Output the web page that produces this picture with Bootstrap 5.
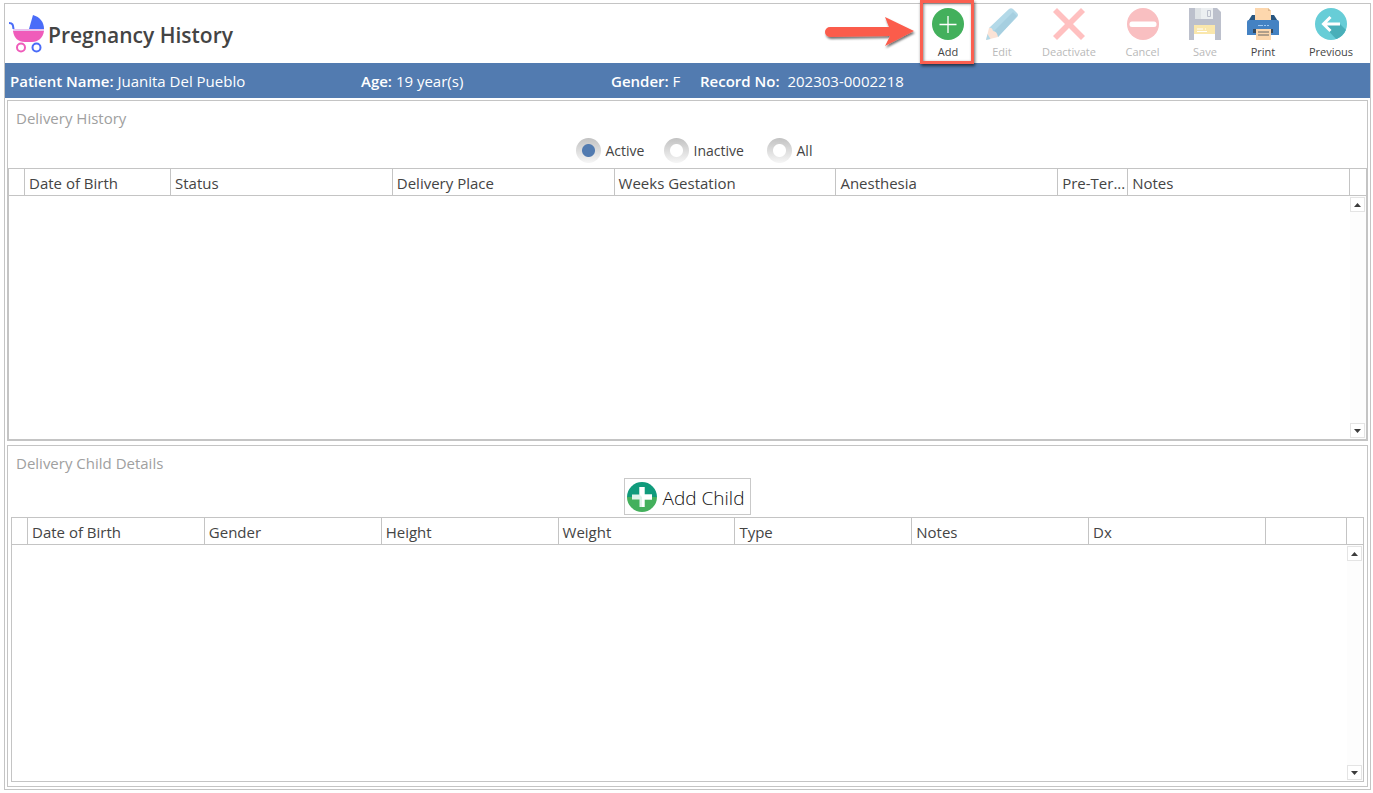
<!DOCTYPE html>
<html lang="en">
<head>
<meta charset="utf-8">
<meta name="viewport" content="width=device-width, initial-scale=1">
<title>Pregnancy History</title>
<link href="https://cdn.jsdelivr.net/npm/bootstrap@5.3.0/dist/css/bootstrap.min.css" rel="stylesheet">
<style>
  :root { --line: #c4c4c4; --ink: #444; --brand: #527bb0; }
  body { font-family: "Segoe UI", "Open Sans", "Noto Sans", sans-serif; font-size: 15px; line-height: 20px; color: var(--ink); background: #fff; }
  .app-shell { padding: 3px 2px 3px 4px; }
  .app-frame { border: 1px solid var(--line); }
  .app-head { height: 59px; padding-left: 4px; }
  .app-title { font-size: 21px; line-height: 28px; font-weight: 600; padding: 2px 0 0 2px; }
  .tool { padding: 4px 0 0; border: 0; background: none; font-size: 11px; line-height: 16px; color: var(--ink); width: 58px; }
  .tool svg { width: 32px; height: 32px; display: block; margin: 0 auto 4px; }
  .tool:disabled { color: #b9b9b9; }
  .tool-sm { width: 54px; }
  .tool-md { width: 67px; }
  .tool-lg { width: 78px; }
  .tool-xl { width: 80px; }
  .callout-box { position: absolute; inset: -4px 1px -1px -1px; border: 3px solid #fb5f50; box-shadow: 1px 2px 3px rgba(0,0,0,.6), inset 1px 1px 3px rgba(0,0,0,.45); pointer-events: none; z-index: 2; }
  .callout-arrow { position: absolute; right: 100%; top: 6px; width: 100px; height: 44px; pointer-events: none; }
  .patient-bar { background: var(--brand); color: #fff; height: 35px; padding: 0 5px; font-size: 15px; }
  .patient-bar b { font-weight: 600; }
  .pb-name { width: 351px; } .pb-age { width: 250px; } .pb-sex { width: 89px; }
  .panels { padding: 2px; gap: 4px; }
  .panel { border: 1px solid var(--line); flex: 1 1 50%; min-height: 0; margin: 0; }
  .panel-name { color: #a0a0a0; font-size: 15px; line-height: 20px; font-weight: 400; padding: 7px 8px 0; margin: 0; }
  .panel-inset { padding: 0 3px 4px; }
  .panel-inset .panel-name { padding-left: 5px; }
  .filters { display: grid; grid-template-columns: 88px 103px 47px; padding: 4px 0 0 14px; height: 40px; align-items: center; font-size: 14px; margin: 0 auto; }
  .filters label { display: flex; align-items: center; gap: 5px; }
  .filters span { padding-top: 2px; }
  .filters input { appearance: none; flex: none; width: 25px; height: 25px; border-radius: 50%; margin: 0; background: radial-gradient(circle, #fff 6px, transparent 7px), linear-gradient(#c2c2c2, #f6f6f6); }
  .filters input:checked { background: radial-gradient(circle, var(--brand) 6px, transparent 7px), linear-gradient(#c2c2c2, #f6f6f6); }
  .grid-box { border: 1px solid var(--line); min-height: 0; }
  .grid-head { table-layout: fixed; width: 100%; border-collapse: separate; border-spacing: 0; }
  .grid-head th { height: 27px; padding: 2px 0 0 4px; font-weight: 400; border-bottom: 1px solid var(--line); border-right: 1px solid var(--line); white-space: nowrap; text-align: left; }
  .grid-head th:last-child { border-right: 0; }
  .c-mark { width: 16px; } .c-dob { width: 146px; } .c-pre { width: 70px; } .c-act { width: 81px; }
  .scroll-rail { width: 16px; padding: 1px 1px 1px 0; background: #fdfdfd; }
  .scroll-rail button { width: 15px; height: 15px; padding: 0; border: 1px solid #e4e4e4; background: #fff; display: flex; align-items: center; justify-content: center; }
  .scroll-rail svg { width: 7px; height: 4px; fill: #3c3c3c; }
  .add-row { height: 44px; padding-top: 5px; }
  .add-child { height: 37px; padding: 0 6px 0 2px; border: 1px solid #c9c9c9; background: #fff; color: #111; font-size: 19px; line-height: 28px; font-weight: 300; gap: 6px; }
  .add-child span { padding-top: 2px; }
  .add-child svg { width: 30px; height: 30px; }
</style>
</head>
<body>
<div class="app-shell vh-100 d-flex flex-column">
<div class="app-frame flex-grow-1 d-flex flex-column">
  <header class="app-head d-flex justify-content-between">
    <div class="d-flex align-items-center">
      <svg width="37" height="40" viewBox="0 0 37 40" aria-hidden="true">
        <path d="M0 9c4 0 4 2 4.500 6" fill="none" stroke="#4a6cf8" stroke-width="2"/>
        <path d="M20 15 24 1c7 2 11 7 11 14z" fill="#4a6cf8"/>
        <path d="M4 15h31v2H4z" fill="#e7c4ee"/>
        <path d="M4 17h31c-1 7-6 11-12 11h-7C9 28 5 24 4 17z" fill="#ef5cba"/>
        <circle cx="12" cy="33.500" r="4" fill="#fff" stroke="#ef5cba" stroke-width="2"/>
        <circle cx="27.500" cy="33.500" r="4" fill="#fff" stroke="#4a6cf8" stroke-width="2"/>
      </svg>
      <h1 class="app-title mb-0">Pregnancy History</h1>
    </div>
    <div class="d-flex align-items-start">
      <div class="position-relative align-self-stretch">
        <svg class="callout-arrow" viewBox="0 0 100 44" aria-hidden="true">
          <defs><filter id="soft" x="-10%" y="-20%" width="120%" height="150%"><feDropShadow dx="1" dy="2" stdDeviation="1.200" flood-opacity=".55"/></filter></defs>
          <path d="M9 17 68 17 64 7 93 21 64 36l5-10L9 27a5 5 0 0 1 0-10z" fill="#fb5b4c" filter="url(#soft)"/>
        </svg>
        <button type="button" class="tool tool-sm">
          <svg viewBox="0 0 32 32"><circle cx="16" cy="16" r="16" fill="#43b05c"/><path d="M16 8v17M7.500 16.500h17" stroke="#fff" stroke-width="1.300"/></svg>Add
        </button>
        <div class="callout-box"></div>
      </div>
      <button type="button" class="tool tool-sm" disabled>
        <svg viewBox="0 0 32 32"><path d="M3 20 23 1q2-1.500 4 0l4 4q2 2 0 4L12 29z" fill="#b3d9e8"/><path d="m7 24 20-20 4 4L12 29z" fill="#a6cfe0"/><path d="M3 20q3-1 4 3 4 0 5 6L0 32z" fill="#fbe3d6"/><path d="m1.500 26 3 5L0 32z" fill="#b3d9e8"/></svg>Edit
      </button>
      <button type="button" class="tool tool-xl" disabled>
        <svg viewBox="0 0 32 32"><path d="M4 0 16 12 28 0l4 4-12 12 12 12-4 4-12-12L4 32l-4-4 12-12L0 4z" fill="#ffc0c0"/></svg>Deactivate
      </button>
      <button type="button" class="tool tool-md" disabled>
        <svg viewBox="0 0 32 32"><circle cx="16" cy="16" r="16" fill="#f9bfc1"/><rect x="2.500" y="13.500" width="27" height="5.500" rx="2.500" fill="#fff"/></svg>Cancel
      </button>
      <button type="button" class="tool" disabled>
        <svg viewBox="0 0 32 32"><path d="M0 0h28l4 4v28H0z" fill="#bcc0cc"/><path d="M6 0h18v11H6z" fill="#eceff1"/><path d="M6 0h6v11H6z" fill="#dfe3e6"/><path d="M18.500 2.500h3v6h-3z" fill="#eceff1" stroke="#bcc0cc"/><path d="M5 17h21v15H5z" fill="#fff"/><path d="M5 17h21v9H5z" fill="#fae7ac"/><path d="M8 21h6M8 23.500h10M16 21h1" stroke="#fff"/></svg>Save
      </button>
      <button type="button" class="tool">
        <svg viewBox="0 0 32 32"><path d="M5 7h22l5 8H0z" fill="#285680"/><path d="M8 0h13l3 3v9H8z" fill="#fdd7ad"/><path d="M21 0v3h3z" fill="#e0b98e"/><path d="M0 14q0-2 2-2h28q2 0 2 2v13H0z" fill="#4482c3"/><path d="M11 17.500h5M17 17.500h2M20 17.500h2" stroke="#9fc9f3"/><path d="M6 21h20v4H6z" fill="#35495e"/><path d="M9 21h15v11H9z" fill="#fdd7ad"/><path d="M11 24h11M11 27h11" stroke="#666"/></svg>Print
      </button>
      <button type="button" class="tool tool-lg">
        <svg viewBox="0 0 32 32"><defs><clipPath id="disc"><circle cx="16" cy="16" r="16"/></clipPath></defs><g clip-path="url(#disc)"><path d="M0 0h32v32H0z" fill="#67cdd7"/><path d="m8 17 16-2 8 8v9H22z" fill="#49afb9"/></g><path d="M25 16H9M15.500 9 8.500 16l7 7" fill="none" stroke="#fff" stroke-width="3"/></svg>Previous
      </button>
    </div>
  </header>

  <div class="patient-bar d-flex align-items-center">
    <div class="pb-name"><b>Patient Name:</b> Juanita Del Pueblo</div>
    <div class="pb-age"><b>Age:</b> 19 year(s)</div>
    <div class="pb-sex"><b>Gender:</b> F</div>
    <div><b class="pe-1">Record No:</b> 202303-0002218</div>
  </div>

  <main class="panels flex-grow-1 d-flex flex-column">
    <section class="panel d-flex flex-column">
      <h2 class="panel-name">Delivery History</h2>
      <div class="filters" role="radiogroup" aria-label="Record status">
        <label><input type="radio" name="status" checked><span>Active</span></label>
        <label><input type="radio" name="status"><span>Inactive</span></label>
        <label><input type="radio" name="status"><span>All</span></label>
      </div>
      <div class="grid-box flex-grow-1 d-flex flex-column">
        <table class="grid-head">
          <colgroup><col class="c-mark"><col class="c-dob"><col><col><col><col><col class="c-pre"><col><col class="c-mark"></colgroup>
          <thead><tr><th></th><th>Date of Birth</th><th>Status</th><th>Delivery Place</th><th>Weeks Gestation</th><th>Anesthesia</th><th>Pre-Ter...</th><th>Notes</th><th></th></tr></thead>
        </table>
        <div class="flex-grow-1 d-flex justify-content-end">
          <div class="scroll-rail d-flex flex-column justify-content-between">
            <button type="button" aria-label="Scroll up"><svg viewBox="0 0 7 4"><path d="M0 4 3.500 0 7 4z"/></svg></button>
            <button type="button" aria-label="Scroll down"><svg viewBox="0 0 7 4"><path d="M0 0h7L3.500 4z"/></svg></button>
          </div>
        </div>
      </div>
    </section>

    <section class="panel panel-inset d-flex flex-column">
      <h2 class="panel-name">Delivery Child Details</h2>
      <div class="add-row d-flex justify-content-center">
        <button type="button" class="add-child d-flex align-items-center">
          <svg viewBox="0 0 30 30"><path d="M0 15a15 15 0 0 1 30 0z" fill="#109b7c"/><path d="M0 15a15 15 0 0 0 30 0z" fill="#43b05c"/><path d="M12.500 5h5v7.500H25v5h-7.500V25h-5v-7.500H5v-5h7.500z" fill="#dff3ea"/><path d="M17.500 5v7.500H25v5h-7.500V25h-2.500V15l-2.500-2.500V5z" fill="#fff"/></svg><span>Add Child</span>
        </button>
      </div>
      <div class="grid-box flex-grow-1 d-flex flex-column">
        <table class="grid-head">
          <colgroup><col class="c-mark"><col><col><col><col><col><col><col><col class="c-act"><col class="c-mark"></colgroup>
          <thead><tr><th></th><th>Date of Birth</th><th>Gender</th><th>Height</th><th>Weight</th><th>Type</th><th>Notes</th><th>Dx</th><th></th><th></th></tr></thead>
        </table>
        <div class="flex-grow-1 d-flex justify-content-end">
          <div class="scroll-rail d-flex flex-column justify-content-between">
            <button type="button" aria-label="Scroll up"><svg viewBox="0 0 7 4"><path d="M0 4 3.500 0 7 4z"/></svg></button>
            <button type="button" aria-label="Scroll down"><svg viewBox="0 0 7 4"><path d="M0 0h7L3.500 4z"/></svg></button>
          </div>
        </div>
      </div>
    </section>
  </main>
</div>
</div>
<script src="https://cdn.jsdelivr.net/npm/bootstrap@5.3.0/dist/js/bootstrap.bundle.min.js"></script>
</body>
</html>
